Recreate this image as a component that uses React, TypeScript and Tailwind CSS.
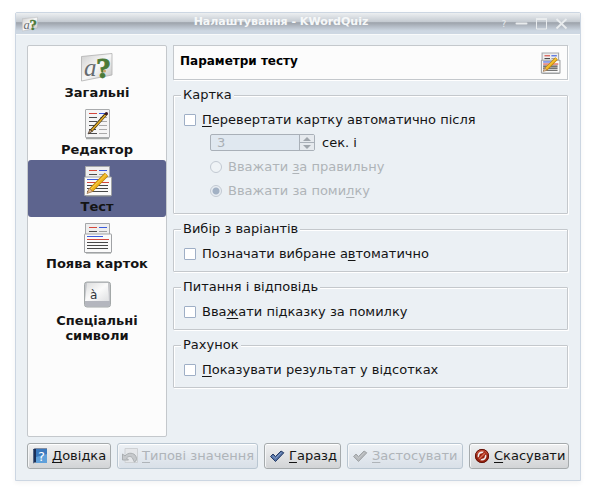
import React from "react";

const fieldColor = "border-[#c4c8cc]";

function LettersIcon({ size, id }: { size: number; id: string }) {
  return (
    <svg width={size} height={size} viewBox="0 0 32 32" aria-hidden="true">
      <defs>
        <linearGradient id={id} x1="0" y1="0" x2="1" y2="1">
          <stop offset="0" stopColor="#cfcfcf" />
          <stop offset="0.5" stopColor="#f8f8f8" />
          <stop offset="1" stopColor="#c2c2c2" />
        </linearGradient>
      </defs>
      <path d="M.5 5.5L31 2.500V24L.5 30z" fill={`url(#${id})`} stroke="#b0b0b0" strokeWidth="0.8" />
      <text x="3" y="25" fontSize="25" fontStyle="italic" fontWeight="normal" fill="#666b70" fontFamily="'Liberation Serif', serif">a</text>
      <text x="15" y="27" fontSize="30" fontWeight="bold" fill="#4b7a37" stroke="#4b7a37" strokeWidth="0.8" fontFamily="'Liberation Serif', serif">?</text>
      <circle cx="23.500" cy="20" r="1.500" fill="#cda768" />
    </svg>
  );
}

function EditorIcon() {
  return (
    <svg width="32" height="32" viewBox="0 0 32 32" aria-hidden="true">
      <path d="M5 30.500h23" stroke="#a4a8a6" strokeWidth="1.500" />
      <rect x="4.500" y="1.500" width="24" height="28" rx="0.500" fill="#f5f5f5" stroke="#a9abad" />
      <path d="M8 5.500h8" stroke="#d4473c" />
      <path d="M18 5.500h8" stroke="#3b5bdc" />
      <path d="M8 9.500h8M8 13.500h8M8 17.500h8M8 21.500h7M8 25.500h8" stroke="#4c4c4c" />
      <path d="M19 9.500h7M18 13.500h8M18 17.500h8M18 21.500h8M18 25.500h8" stroke="#a9a9a9" />
      <path d="M25.500 5.500L10 23" stroke="#2d2510" strokeWidth="3" />
      <path d="M24.500 7L10.500 22.500" stroke="#dfa926" strokeWidth="1.800" />
      <path d="M9 21.500L7 26l4-2.500z" fill="#dbb38c" stroke="#302520" strokeWidth="0.700" />
      <circle cx="25.500" cy="5.500" r="1.500" fill="#3c1822" />
    </svg>
  );
}

function CardsIcon({ pencil, size }: { pencil: boolean; size: number }) {
  return (
    <svg width={size} height={size} viewBox="0 0 32 32" strokeWidth={size < 32 ? 1.6 : 1} aria-hidden="true">
      <path d="M4.500 12V1.500h24V12" fill="#eee" stroke="#a5a7aa" />
      <path d="M8 5.500h8" stroke="#d4473c" />
      <path d="M18 5.500h8" stroke="#3b5bdc" />
      <path d="M8 9.500h8" stroke="#4c4c4c" />
      <path d="M18 9.500h8" stroke="#a0a0a0" />
      <path d="M5 31h25" stroke="#8c9290" />
      <rect x="3.500" y="12" width="27" height="18.500" rx="0.500" fill="#fafafa" stroke="#a0a2a5" />
      <path d="M6 14.500h16" stroke="#3b5bdc" />
      <path d="M6 17.500h22" stroke="#d4473c" />
      <path d="M6 20.500h21M6 23.500h21M6 26.500h21" stroke="#484848" />
      {pencil && (
        <g>
          <path d="M25.500 9.500L10 25" stroke="#b8820f" strokeWidth="5" />
          <path d="M25.500 9.500L10 25" stroke="#efb41d" strokeWidth="3.400" />
          <path d="M25 9.500L9.500 24.500" stroke="#f8cf55" strokeWidth="1" />
          <path d="M8.200 23L6 28.500l5.700-2z" fill="#e5bc94" stroke="#92683d" strokeWidth="0.700" />
        </g>
      )}
    </svg>
  );
}

function KeyIcon() {
  return (
    <svg width="32" height="32" viewBox="0 0 32 32" aria-hidden="true">
      <defs>
        <linearGradient id="keyFace" x1="0" y1="0" x2="1" y2="1">
          <stop offset="0" stopColor="#dcdddd" />
          <stop offset="0.500" stopColor="#fafafa" />
          <stop offset="1" stopColor="#dfe0e2" />
        </linearGradient>
      </defs>
      <rect x="3.500" y="3" width="26" height="25" rx="2.500" fill="#c3c5ca" stroke="#a3a8a8" />
      <path d="M6 4h21l1 18H4z" fill="url(#keyFace)" />
      <path d="M4 22h25v3.500a2 2 0 0 1-2 2H6a2 2 0 0 1-2-2z" fill="#b4b6be" />
      <path d="M27 4l2 18v-17z" fill="#c5c6c9" />
      <text x="9" y="20" fontSize="12" fontWeight="normal" fill="#30343a" fontFamily="'DejaVu Sans', sans-serif">à</text>
    </svg>
  );
}

function HelpBookIcon() {
  return (
    <svg width="16" height="16" viewBox="0 0 16 16" aria-hidden="true">
      <path d="M1 1.500L2.500.5H15v14H2.500L1 15.500z" fill="#1b2f57" />
      <path d="M4 1h11v14H4z" fill="#3a78bd" />
      <path d="M4 9l11-3v9H4z" fill="#5fa0da" />
      <path d="M1.500 2v13" stroke="#7b8da8" strokeWidth="0.600" />
      <text x="6" y="13" fontSize="13" fill="#fff" fontFamily="'DejaVu Sans', sans-serif">?</text>
    </svg>
  );
}

function UndoIcon() {
  return (
    <svg width="16" height="16" viewBox="0 0 16 16" aria-hidden="true">
      <path d="M3 .5h12.500v14H3z" fill="#e5e7ea" stroke="#ced1d4" />
      <path d="M.5 6v6h6l-2-2c2.500-2.500 6-2 7 2.500L12.500 14c2-1 2.500-3 1.500-5.500-1.800-4-8-4.500-11-.5z" fill="#c6c9cc" stroke="#a5a9ac" strokeWidth="0.900" />
    </svg>
  );
}

function CheckIcon({ muted }: { muted?: boolean }) {
  return (
    <svg width="16" height="16" viewBox="0 0 16 16" aria-hidden="true">
      <path
        d="M1.500 8.500L4 6l2.500 2.500 5.500-5.500 2.800 1.800L6.500 13.500z"
        fill={muted ? "#b5b8bb" : "#5673a6"}
        stroke={muted ? "#a1a5a8" : "#263c65"}
        strokeLinejoin="round"
      />
      <path d="M3.500 8l3 2.500 6-6" fill="none" stroke={muted ? "#c4c7c9" : "#7f9bc7"} />
    </svg>
  );
}

function CancelIcon() {
  return (
    <svg width="16" height="16" viewBox="0 0 16 16" aria-hidden="true">
      <circle cx="8" cy="8" r="7" fill="#98210e" />
      <path d="M1.200 7a7 7 0 0 1 13.600 0C11 5 5 5 1.200 7z" fill="#c24a34" />
      <circle cx="8" cy="8" r="3.600" fill="none" stroke="#f0eeee" strokeWidth="1.700" />
      <path d="M4.500 11.500l7-7" stroke="#98210e" strokeWidth="3.200" />
      <path d="M5 11l6-6" stroke="#d8684f" strokeWidth="1.400" />
      <circle cx="8" cy="8" r="6.600" fill="none" stroke="#5c1108" strokeWidth="0.900" />
    </svg>
  );
}

function Key({ children }: { children: React.ReactNode }) {
  return (
    <span className="underline decoration-1 underline-offset-2 [text-decoration-skip-ink:none]">{children}</span>
  );
}

function NavItem({ icon, children, selected }: { icon: React.ReactNode; children: React.ReactNode; selected?: boolean }) {
  return (
    <button
      type="button"
      aria-current={selected ? "page" : undefined}
      className={`flex w-full flex-col items-center gap-0.5 rounded-[3px] pt-[5px] pb-[3px] text-[13px] leading-[15px] font-bold ${selected ? "bg-[#5d648e]" : ""}`}
    >
      {icon}
      <span className="whitespace-nowrap">{children}</span>
    </button>
  );
}

function Group({ title, children }: { title: string; children: React.ReactNode }) {
  return (
    <fieldset
      className={`min-w-0 rounded-[1px] border ${fieldColor} px-[10px] pt-[9px] pb-[9px] shadow-[1px_1px_0_#fff,inset_1px_1px_0_#fff]`}
    >
      <legend className="-ml-[3px] bg-[#ebf0f4] px-0.5">{title}</legend>
      {children}
    </fieldset>
  );
}

function Check({ children }: { children: React.ReactNode }) {
  return (
    <label className="flex items-center gap-1.5 whitespace-nowrap">
      <input type="checkbox" className="size-3 appearance-none rounded-[1px] border border-[#9fafc6] bg-white" />
      <span>{children}</span>
    </label>
  );
}

function Radio({ checked, children }: { checked?: boolean; children: React.ReactNode }) {
  return (
    <label className="flex items-center gap-1.5 whitespace-nowrap text-[#afb4b8]">
      <input
        type="radio"
        name="flip"
        disabled
        defaultChecked={checked}
        className="size-3 appearance-none rounded-full border border-[#c2c9d2] bg-[#eff3f6] checked:bg-[radial-gradient(circle,#a2b1c4_0_3px,#e9eef3_4px)]"
      />
      <span>{children}</span>
    </label>
  );
}

function DialogButton({ icon, disabled, children }: { icon: React.ReactNode; disabled?: boolean; children: React.ReactNode }) {
  return (
    <button
      type="button"
      disabled={disabled}
      className={`flex h-[26px] min-w-0 items-center gap-1 rounded-[3px] border pl-1 whitespace-nowrap shadow-[inset_0_1px_0_#fff,inset_1px_0_0_#f5f6f7] ${
        disabled
          ? "border-[#b9c6d1] bg-linear-to-b from-[#edf1f5] to-[#d9e0e8] text-[#afb4b9]"
          : "border-[#a5aaac] bg-linear-to-b from-[#f0f1f2] to-[#d2d4d6]"
      }`}
    >
      <span className="shrink-0">{icon}</span>
      <span>{children}</span>
    </button>
  );
}

export default function App() {
  return (
    <div className="flex min-h-screen flex-col bg-white px-[15px] pt-3 pb-[18px] font-['DejaVu_Sans',sans-serif] text-[13px] leading-4 text-[#141414]">
      <main className="flex flex-1 flex-col rounded-t-[2px] border border-[#ccd6e2] bg-[#ebf0f4] shadow-[0_2px_5px_#0000000d]">
        <header className="flex h-[22px] items-center border-b border-[#f8fafb] bg-[linear-gradient(#eceff1,#c4cad1_42%,#9da3ab_46%,#b5bdc7_65%,#cdd7e2_85%)] pr-3 pl-1.5">
          <LettersIcon size={16} id="titlePaper" />
          <h1 className="flex-1 pb-1 pl-6 text-center text-[11px] leading-4 font-bold text-[#f6f8f9]">Налаштування - KWordQuiz</h1>
          <div className="flex items-center gap-[7px] text-[#e9ecee]">
            <button type="button" aria-label="Довідка" className="flex w-2 items-center justify-center text-[9px]">?</button>
            <button type="button" aria-label="Згорнути">
              <svg width="13" height="13" viewBox="0 0 13 13"><path d="M1.500 6.500h10" stroke="currentColor" strokeWidth="2" strokeLinecap="round" /></svg>
            </button>
            <button type="button" aria-label="Розгорнути">
              <svg width="13" height="13" viewBox="0 0 13 13"><path d="M1.500 12V2.500h10V12z" fill="none" stroke="currentColor" /><path d="M1 2h11" stroke="currentColor" strokeWidth="2" /></svg>
            </button>
            <button type="button" aria-label="Закрити">
              <svg width="13" height="13" viewBox="0 0 13 13"><path d="M1.500 2l10 9.500M11.500 2l-10 9.500" stroke="currentColor" strokeWidth="1.800" /></svg>
            </button>
          </div>
        </header>

        <div className="flex flex-1 flex-col gap-1.5 px-[11px] pt-[10px] pb-[11px]">
          <div className="flex flex-1 gap-1.5">
            <nav className={`w-[140px] shrink-0 rounded-[2px] border ${fieldColor} bg-[#fcfcfc]`}>
              <NavItem icon={<LettersIcon size={32} id="navPaper" />}>Загальні</NavItem>
              <NavItem icon={<EditorIcon />}>Редактор</NavItem>
              <NavItem icon={<CardsIcon pencil size={32} />} selected>Тест</NavItem>
              <NavItem icon={<CardsIcon pencil={false} size={32} />}>Поява карток</NavItem>
              <NavItem icon={<KeyIcon />}>Спеціальні<br />символи</NavItem>
            </nav>

            <section className="mr-px flex min-w-0 flex-1 flex-col gap-[7px]">
              <div className={`flex h-[35px] items-center justify-between border ${fieldColor} bg-[#fcfcfc] px-1.5 shadow-[1px_1px_0_#fff]`}>
                <h2 className="pb-1 text-xs leading-4 font-bold text-black">Параметри тесту</h2>
                <CardsIcon pencil size={22} />
              </div>

              <Group title="Картка">
                <Check><Key>П</Key>еревертати картку автоматично після</Check>
                <div className="mt-1.5 flex flex-col gap-2 pl-[26px]">
                  <div className="flex h-[17px] items-center gap-[7px]">
                    <div className="flex h-[17px] w-[105px] rounded-[2px] border border-[#a9b0b8] bg-[#e0e8f0]">
                      <input
                        id="seconds"
                        type="text"
                        disabled
                        defaultValue="3"
                        className="w-full min-w-0 flex-1 pl-1.5 text-[13px] leading-[15px] text-[#a9afb5]"
                      />
                      <div className="flex w-[15px] flex-col border-l border-[#a9b0b8] bg-[#e6eaee]">
                        <button type="button" disabled aria-label="Більше" className="flex flex-1 items-center justify-center border-b border-[#a9b0b8]">
                          <svg width="8" height="4" viewBox="0 0 8 4"><path d="M4 0l4 4H0z" fill="#a0a6ac" /></svg>
                        </button>
                        <button type="button" disabled aria-label="Менше" className="flex flex-1 items-center justify-center">
                          <svg width="8" height="4" viewBox="0 0 8 4"><path d="M0 0h8L4 4z" fill="#a0a6ac" /></svg>
                        </button>
                      </div>
                    </div>
                    <label htmlFor="seconds">сек. і</label>
                  </div>
                  <Radio>Вважати <Key>з</Key>а правильну</Radio>
                  <div className="pb-[5px]">
                    <Radio checked>Вважати за поми<Key>л</Key>ку</Radio>
                  </div>
                </div>
              </Group>

              <Group title="Вибір з варіантів">
                <Check>Позначати вибране а<Key>в</Key>томатично</Check>
              </Group>

              <Group title="Питання і відповідь">
                <Check>Вва<Key>ж</Key>ати підказку за помилку</Check>
              </Group>

              <Group title="Рахунок">
                <Check><Key>П</Key>оказувати результат у відсотках</Check>
              </Group>
            </section>
          </div>

          <footer className="grid grid-cols-[84fr_141fr_77fr_116fr_100fr] gap-1.5">
            <DialogButton icon={<HelpBookIcon />}><Key>Д</Key>овідка</DialogButton>
            <DialogButton icon={<UndoIcon />} disabled><Key>Т</Key>ипові значення</DialogButton>
            <DialogButton icon={<CheckIcon />}><Key>Г</Key>аразд</DialogButton>
            <DialogButton icon={<CheckIcon muted />} disabled><Key>З</Key>астосувати</DialogButton>
            <DialogButton icon={<CancelIcon />}><Key>С</Key>касувати</DialogButton>
          </footer>
        </div>
      </main>
    </div>
  );
}
